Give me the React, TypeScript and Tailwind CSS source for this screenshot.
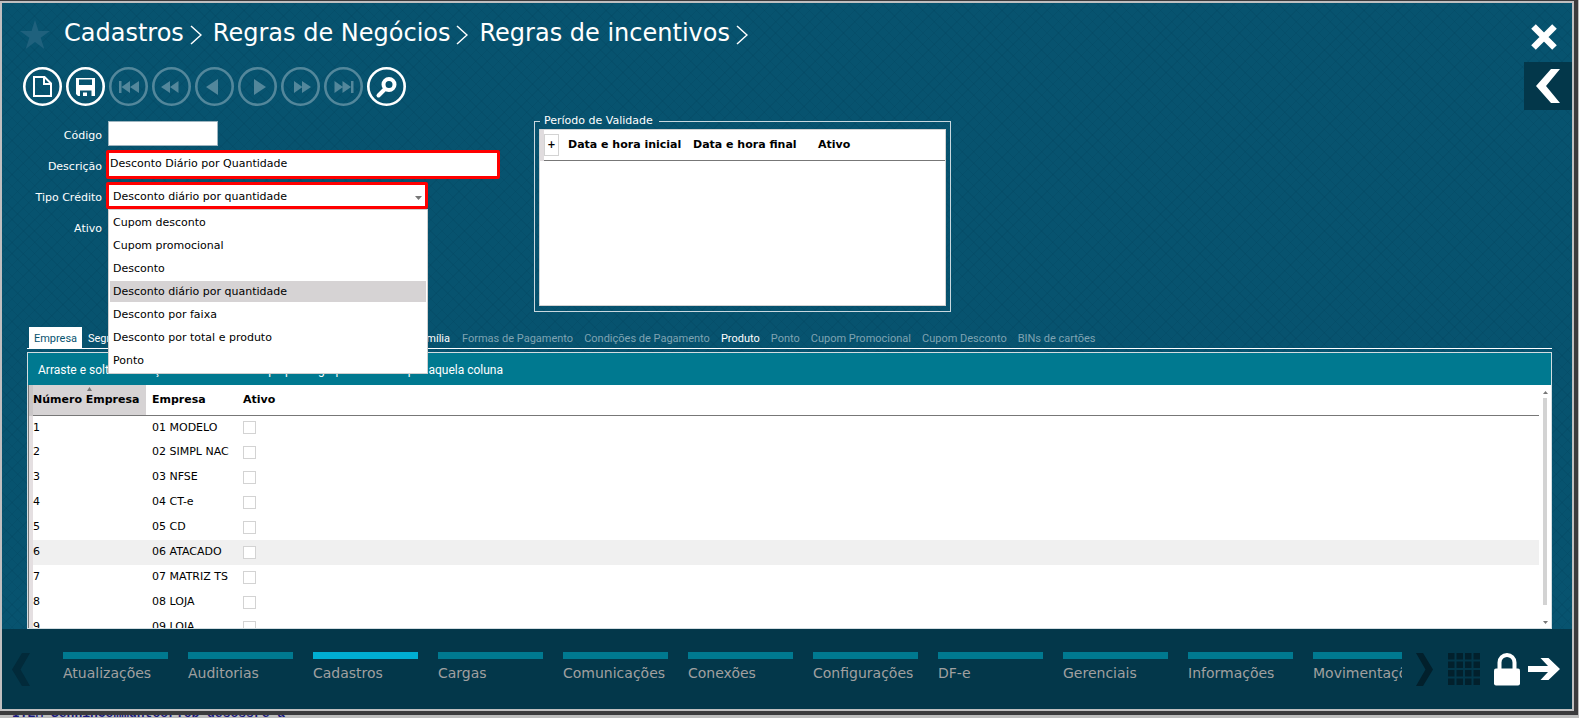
import React, { useState } from "react";

const fontUi = "font-['DejaVu_Sans',Verdana,sans-serif]";
const fontTabs = "font-['Roboto','Open_Sans',sans-serif]";

const creditTypes = [
  "Cupom desconto",
  "Cupom promocional",
  "Desconto",
  "Desconto diário por quantidade",
  "Desconto por faixa",
  "Desconto por total e produto",
  "Ponto",
];

const companies = [
  { id: 1, name: "01 MODELO" },
  { id: 2, name: "02 SIMPL NAC" },
  { id: 3, name: "03 NFSE" },
  { id: 4, name: "04 CT-e" },
  { id: 5, name: "05 CD" },
  { id: 6, name: "06 ATACADO" },
  { id: 7, name: "07 MATRIZ TS" },
  { id: 8, name: "08 LOJA" },
  { id: 9, name: "09 LOJA" },
];

const modules = [
  "Atualizações",
  "Auditorias",
  "Cadastros",
  "Cargas",
  "Comunicações",
  "Conexões",
  "Configurações",
  "DF-e",
  "Gerenciais",
  "Informações",
  "Movimentações",
];

const tabs = [
  { label: "Formas de Pagamento", enabled: false },
  { label: "Condições de Pagamento", enabled: false },
  { label: "Produto", enabled: true },
  { label: "Ponto", enabled: false },
  { label: "Cupom Promocional", enabled: false },
  { label: "Cupom Desconto", enabled: false },
  { label: "BINs de cartões", enabled: false },
];

interface ToolButtonProps {
  label: string;
  disabled?: boolean;
  children: React.ReactNode;
}

const ToolButton: React.FC<ToolButtonProps> = ({ label, disabled, children }) => (
  <button
    type="button"
    aria-label={label}
    disabled={disabled}
    className={`size-[39px] shrink-0 ${disabled ? "text-[#53879b]" : "text-white"}`}
  >
    <svg viewBox="0 0 39 39" className="size-full" fill="currentColor">
      <circle cx="19.5" cy="19.5" r="18.2" fill="none" stroke="currentColor" strokeWidth="2.6" />
      {children}
    </svg>
  </button>
);

const Toolbar: React.FC = () => (
  <div className="flex gap-1 pl-[21px]">
    <ToolButton label="Novo">
      <path
        d="M11 10h10.5l6.5 6.500v12.500h-17zM21 10v7h7"
        fill="none"
        stroke="currentColor"
        strokeWidth="2"
      />
    </ToolButton>
    <ToolButton label="Salvar">
      <path
        fillRule="evenodd"
        d="M10 11h19v18h-3.500v-5.500h-11.500v5.500h-2l-2-2zM13 12.500v5.500h13v-5.500zM17 25.500h4v3.500h-4z"
      />
    </ToolButton>
    <ToolButton label="Primeiro" disabled>
      <path d="M10 14h2.500v12h-2.500zM12.500 20l8.500-6v12zM21 20l9-6v12z" />
    </ToolButton>
    <ToolButton label="Retroceder" disabled>
      <path d="M9 20l9-6v12zM18 20l8.500-6v12z" />
    </ToolButton>
    <ToolButton label="Anterior" disabled>
      <path d="M11 20l12-8v16z" />
    </ToolButton>
    <ToolButton label="Próximo" disabled>
      <path d="M28 20l-12-8v16z" />
    </ToolButton>
    <ToolButton label="Avançar" disabled>
      <path d="M30 20l-9-6v12zM21.500 20l-8.500-6v12z" />
    </ToolButton>
    <ToolButton label="Último" disabled>
      <path d="M29.500 14h-2.500v12h2.500zM27 20l-8.500-6v12zM19 20l-8.500-6v12z" />
    </ToolButton>
    <ToolButton label="Pesquisar">
      <circle cx="22" cy="17.500" r="5.500" fill="none" stroke="currentColor" strokeWidth="4" />
      <path d="M17.500 22.500l-6 6" fill="none" stroke="currentColor" strokeWidth="4" strokeLinecap="round" />
    </ToolButton>
  </div>
);

const Crumb: React.FC<{ label: string }> = ({ label }) => (
  <li className="flex items-center gap-1.5">
    <a href="#">{label}</a>
    <svg viewBox="0 0 12 20" className="mt-1 h-5 w-3" fill="none" stroke="currentColor" strokeWidth="1.500">
      <path d="M1 1l10 9-10 9" />
    </svg>
  </li>
);

const Header: React.FC = () => (
  <header className="flex justify-between">
    <div>
      <nav className="flex h-16 items-center pl-[18px]">
        <svg viewBox="0 0 30 30" className="size-[30px] text-[#1f617d]" fill="currentColor">
          <path d="M15 0l3.500 11h11.500l-9.300 6.800 3.600 11.200-9.300-7-9.300 7 3.600-11.200-9.300-6.800h11.500z" />
        </svg>
        <ol className="flex gap-[11px] pb-1 pl-3.5 text-2xl text-white">
          <Crumb label="Cadastros" />
          <Crumb label="Regras de Negócios" />
          <Crumb label="Regras de incentivos" />
        </ol>
      </nav>
      <Toolbar />
    </div>
    <div className="flex flex-col items-end gap-3 pt-[21px]">
      <button type="button" aria-label="Fechar" className="mr-[15px] text-white">
        <svg viewBox="0 0 26 26" className="size-[26px]" fill="none" stroke="currentColor" strokeWidth="6.500">
          <path d="M2.500 2.500l21 21M23.500 2.500l-21 21" />
        </svg>
      </button>
      <button
        type="button"
        aria-label="Abrir painel"
        className="flex size-12 items-center justify-center bg-[#03374a] text-white"
      >
        <svg viewBox="0 0 24 34" className="h-[34px] w-6" fill="currentColor">
          <path d="M15 0h9l-14 17 14 17h-9l-15-17z" />
        </svg>
      </button>
    </div>
  </header>
);

const RuleForm: React.FC = () => {
  const [description, setDescription] = useState("Desconto Diário por Quantidade");
  const [creditType, setCreditType] = useState("Desconto diário por quantidade");
  const labelClass = "w-[100px] shrink-0 pt-1.5 text-right";

  return (
    <form className="w-[532px] shrink-0 text-[11px] text-white">
      <div className="flex h-[31px] items-center gap-1.5">
        <label htmlFor="codigo" className={labelClass}>
          Código
        </label>
        <input id="codigo" className="h-[25px] w-[110px] border border-[#9db4bf] bg-white px-1 text-black outline-none" />
      </div>
      <div className="flex h-[31px] items-center gap-1">
        <label htmlFor="descricao" className={labelClass}>
          Descrição
        </label>
        <input
          id="descricao"
          value={description}
          onChange={(e) => setDescription(e.target.value)}
          className="h-[29px] w-[394px] rounded-xs border-3 border-[#ff0000] bg-white pb-0.5 pl-px text-black outline-none"
        />
      </div>
      <div className="relative flex h-[31px] items-center gap-1">
        <label htmlFor="tipo" className={labelClass}>
          Tipo Crédito
        </label>
        <div className="relative">
          <select
            id="tipo"
            value={creditType}
            onChange={(e) => setCreditType(e.target.value)}
            className="block h-[27px] w-[322px] appearance-none rounded-xs border-3 border-[#ff0000] bg-white pt-1 pl-1 text-black outline-none"
          >
            {creditTypes.map((type) => (
              <option key={type}>{type}</option>
            ))}
          </select>
          <svg viewBox="0 0 7 4" className="pointer-events-none absolute top-3.5 right-1.5 h-1 w-[7px]" fill="#777">
            <path d="M0 0h7l-3.500 4z" />
          </svg>
          <ul
            role="listbox"
            aria-label="Tipo Crédito"
            className="absolute top-full right-0 left-0.5 z-10 flex flex-col gap-0.5 border border-[#cfcfcf] bg-white px-px py-0.5 text-black"
          >
            {creditTypes.map((type) => (
              <li
                key={type}
                role="option"
                aria-selected={type === creditType}
                onClick={() => setCreditType(type)}
                className={`flex h-[21px] items-center pt-px pl-[3px] ${type === creditType ? "bg-[#d6d3d4]" : ""}`}
              >
                {type}
              </li>
            ))}
          </ul>
        </div>
      </div>
      <div className="flex h-[31px] items-center gap-1.5">
        <label htmlFor="ativo" className={labelClass}>
          Ativo
        </label>
        <input id="ativo" type="checkbox" className="size-[13px] appearance-none border border-[#d3d3d3] bg-white" />
      </div>
    </form>
  );
};

const ValidityPeriod: React.FC = () => (
  <fieldset className="-mt-[5px] h-[199px] w-[417px] border border-[#c9d8df] px-1 pb-[5px] text-[11px] text-white">
    <legend className="ml-px pr-1.5 pl-1 leading-4">Período de Validade</legend>
    <div className="h-full border border-[#d3d3d3] bg-white text-black">
      <table className="w-full table-fixed border-collapse text-left">
        <thead>
          <tr className="h-[30px] border-b border-l border-b-[#777] border-l-[#777]">
            <th className="w-[26px] border-l-4 border-[#e0dcde] p-0">
              <button
                type="button"
                aria-label="Adicionar"
                className="block h-[22px] w-[15px] border border-[#d3d3d3] text-[10px]"
              >
                +
              </button>
            </th>
            <th className="w-[125px] p-0 whitespace-nowrap">Data e hora inicial</th>
            <th className="w-[125px] p-0 whitespace-nowrap">Data e hora final</th>
            <th className="p-0">Ativo</th>
          </tr>
        </thead>
      </table>
    </div>
  </fieldset>
);

const RuleTabs: React.FC = () => (
  <div
    role="tablist"
    className={`mr-5 ml-[25px] flex items-center border-b border-white pl-0.5 text-[11px] text-white ${fontTabs}`}
  >
    <button type="button" role="tab" aria-selected className="h-[21px] w-[53px] bg-white pt-1 text-[#07536f]">
      Empresa
    </button>
    <div className="flex w-[368px] justify-between pt-1 pl-1.5">
      <button type="button" role="tab">Segmentos</button>
      <button type="button" role="tab">Grupos</button>
      <button type="button" role="tab">Família</button>
    </div>
    <div className="flex gap-[11px] pt-1 pl-3">
      {tabs.map((tab) => (
        <button
          key={tab.label}
          type="button"
          role="tab"
          disabled={!tab.enabled}
          className={tab.enabled ? "text-white" : "text-[#7fa3b2]"}
        >
          {tab.label}
        </button>
      ))}
    </div>
  </div>
);

const CompanyGrid: React.FC = () => (
  <section className="mt-[3px] mr-5 ml-[25px] flex min-h-0 flex-1 flex-col border border-[#d3dde1] bg-white">
    <p className={`flex h-8 shrink-0 items-center bg-[#007990] pt-0.5 pl-2.5 text-xs text-white ${fontTabs}`}>
      Arraste e solte o cabeçalho da coluna no topo para agrupar os dados por aquela coluna
    </p>
    <div className="flex min-h-0 flex-1">
      <div className="min-w-0 flex-1 overflow-hidden border-l border-[#777]">
        <table className="w-full table-fixed border-collapse text-left text-[11px] text-black">
          <thead>
            <tr className="h-[30px] border-b border-[#777]">
              <th className="relative w-[115px] border-l-4 border-[#c9c6c7] bg-[#d6d3d4] p-0 whitespace-nowrap">
                Número Empresa
                <svg viewBox="0 0 5 4" className="absolute inset-x-0 top-0.5 mx-auto h-1 w-[5px]" fill="#777">
                  <path d="M2.500 0l2.500 4h-5z" />
                </svg>
              </th>
              <th className="w-[97px] p-0 pl-1.5">Empresa</th>
              <th className="p-0">Ativo</th>
            </tr>
          </thead>
          <tbody>
            {companies.map((company) => (
              <tr key={company.id} className={`h-[25px] ${company.id === 6 ? "bg-[#f0f0f0]" : ""}`}>
                <td className="border-l-4 border-[#e4dfe1] p-0">{company.id}</td>
                <td className="p-0 pl-1.5 whitespace-nowrap">{company.name}</td>
                <td className="p-0">
                  <input
                    type="checkbox"
                    aria-label={`Ativo ${company.name}`}
                    className="block size-[13px] appearance-none border border-[#d3d3d3] bg-white"
                  />
                </td>
              </tr>
            ))}
          </tbody>
        </table>
      </div>
      <div className="flex w-3 shrink-0 flex-col items-center pt-1.5 pb-1">
        <svg viewBox="0 0 5 3" className="h-[3px] w-[5px]" fill="#777">
          <path d="M2.500 0l2.500 3h-5z" />
        </svg>
        <div className="mt-1 mb-4 w-1 flex-1 bg-[#d3d3d3]" />
        <svg viewBox="0 0 5 3" className="h-[3px] w-[5px]" fill="#777">
          <path d="M2.500 3l2.500-3h-5z" />
        </svg>
      </div>
    </div>
  </section>
);

const Footer: React.FC = () => {
  const [active, setActive] = useState("Cadastros");

  return (
    <footer className="flex h-20 shrink-0 items-center bg-[#03374a] pr-3">
      <button type="button" aria-label="Anterior" className="ml-2.5 shrink-0 text-[#022a3a]">
        <svg viewBox="0 0 18 33" className="h-[33px] w-[18px]" fill="currentColor">
          <path d="M10 0h8l-9.500 16.500 9.500 16.500h-8l-10-16.500z" />
        </svg>
      </button>
      <nav className="ml-[33px] flex min-w-0 flex-1 gap-5 overflow-hidden pb-1">
        {modules.map((name) => (
          <button
            key={name}
            type="button"
            onClick={() => setActive(name)}
            className="w-[105px] shrink-0 text-left text-sm text-[#a0a0a0]"
          >
            <span className={`mb-1 block h-[7px] ${name === active ? "bg-[#00aed3]" : "bg-[#007990]"}`} />
            {name}
          </button>
        ))}
      </nav>
      <div className="flex shrink-0 items-center pl-3.5">
        <button type="button" aria-label="Próximo" className="text-[#02202c]">
          <svg viewBox="0 0 18 33" className="h-[33px] w-[18px]" fill="currentColor">
            <path d="M0 0h7l10 16.500-10 16.500h-7l9.500-16.500z" />
          </svg>
        </button>
        <button type="button" aria-label="Menu" className="ml-3.5 text-[#02202c]">
          <svg viewBox="0 0 32 32" className="size-8" fill="currentColor">
            {[0, 8.5, 17, 25.5].map((y) =>
              [0, 8.5, 17, 25.5].map((x) => <rect key={`${x}-${y}`} x={x} y={y} width="6.500" height="6.500" />)
            )}
          </svg>
        </button>
        <button type="button" aria-label="Bloquear" className="ml-3.5 text-white">
          <svg viewBox="0 0 26 33" className="h-[33px] w-[26px]" fill="currentColor">
            <rect x="0" y="15.500" width="26" height="17" rx="2" />
            <path d="M5.500 17v-7.500a7.500 7.500 0 0 1 15 0v7.500" fill="none" stroke="currentColor" strokeWidth="4" />
          </svg>
        </button>
        <button type="button" aria-label="Sair" className="ml-2 text-white">
          <svg viewBox="0 0 32 22" className="h-[22px] w-8" fill="currentColor">
            <path d="M0 8h20l-7.500-8h8l11.500 11-11.500 11h-8l7.500-8h-20z" />
          </svg>
        </button>
      </div>
    </footer>
  );
};

const App: React.FC = () => {
  return (
    <div className={`flex h-screen flex-col overflow-hidden bg-[#bdbdbd] pr-px ${fontUi}`}>
      <div className="flex min-h-0 flex-1 border-t border-r-4 border-b-4 border-[#3b3b3d]">
        <div className="flex min-w-0 flex-1 flex-col border-2 border-[#c0bfc0]">
          <main className="flex min-h-0 flex-1 flex-col bg-[#07536f] bg-[repeating-linear-gradient(45deg,#00405a33_0_1px,transparent_1px_8px),repeating-linear-gradient(-45deg,#00405a33_0_1px,transparent_1px_8px)]">
            <Header />
            <div className="flex h-[217px] shrink-0 pt-2">
              <RuleForm />
              <ValidityPeriod />
            </div>
            <RuleTabs />
            <CompanyGrid />
          </main>
          <Footer />
        </div>
      </div>
      <div className="flex h-[3px] shrink-0 items-end overflow-hidden pl-3 font-['Liberation_Mono',monospace] text-[13px] leading-2 font-bold whitespace-pre text-[#1a1a80]">
        ITEM SenhinCommuntcor.cb desossre a
      </div>
    </div>
  );
};

export default App;
